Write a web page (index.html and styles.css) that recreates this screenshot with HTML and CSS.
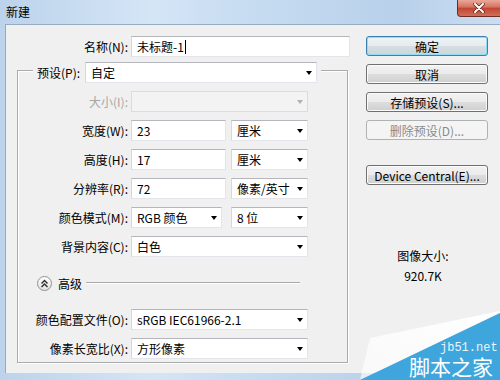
FILE: index.html
```html
<!DOCTYPE html>
<html lang="zh-CN">
<head>
  <meta charset="UTF-8">
  <title>新建</title>
  <link rel="stylesheet" href="styles.css">
</head>
<body>

  <div class="window">
    <div class="titlebar">
      <span class="title">新建</span>
      <span class="close">
        <svg width="12" height="10" viewBox="0 0 12 10"><path d="M2 1 L10 9 M10 1 L2 9" stroke="#5a1d14" stroke-width="3.4" stroke-linecap="round"/><path d="M2 1 L10 9 M10 1 L2 9" stroke="#fff" stroke-width="2" stroke-linecap="round"/></svg>
      </span>
    </div>

    <div class="client">
      <div class="form">
        <div class="name-row">
          <span class="name-label">名称(N):</span>
          <div class="field name-field">未标题-1<span class="caret"></span></div>
        </div>

        <div class="group">
          <div class="group-head">
            <span>预设(P):</span>
            <div class="select preset"><span>自定</span><i class="arrow"></i></div>
          </div>

          <div class="rows rows-top">
            <div class="row off">
              <label>大小(I):</label>
              <div class="select wide"><span></span><i class="arrow"></i></div>
            </div>
            <div class="row">
              <label>宽度(W):</label>
              <div class="field num">23</div>
              <div class="select unit"><span>厘米</span><i class="arrow"></i></div>
            </div>
            <div class="row">
              <label>高度(H):</label>
              <div class="field num">17</div>
              <div class="select unit"><span>厘米</span><i class="arrow"></i></div>
            </div>
            <div class="row">
              <label>分辨率(R):</label>
              <div class="field num">72</div>
              <div class="select unit"><span>像素/英寸</span><i class="arrow"></i></div>
            </div>
            <div class="row">
              <label>颜色模式(M):</label>
              <div class="select mode"><span>RGB 颜色</span><i class="arrow"></i></div>
              <div class="select unit"><span>8 位</span><i class="arrow"></i></div>
            </div>
            <div class="row">
              <label>背景内容(C):</label>
              <div class="select wide"><span>白色</span><i class="arrow"></i></div>
            </div>
          </div>

          <div class="advanced">
            <span class="adv-btn">
              <svg width="9" height="9" viewBox="0 0 9 9"><path d="M1.5 4.5 L4.5 1.5 L7.5 4.5 M1.5 8 L4.5 5 L7.5 8" fill="none" stroke="#2b2b2b" stroke-width="1.4"/></svg>
            </span>
            <span class="adv-text">高级</span>
            <span class="adv-line"></span>
          </div>

          <div class="rows">
            <div class="row">
              <label>颜色配置文件(O):</label>
              <div class="select wide"><span>sRGB IEC61966-2.1</span><i class="arrow"></i></div>
            </div>
            <div class="row">
              <label>像素长宽比(X):</label>
              <div class="select wide"><span>方形像素</span><i class="arrow"></i></div>
            </div>
          </div>
        </div>
      </div>

      <div class="side">
        <button class="btn default">确定</button>
        <button class="btn">取消</button>
        <button class="btn">存储预设(S)...</button>
        <button class="btn" disabled>删除预设(D)...</button>
        <button class="btn device">Device Central(E)...</button>
        <div class="info">
          <div>图像大小:</div>
          <div>920.7K</div>
        </div>
      </div>
    </div>

    <svg class="watermark" width="145" height="75" viewBox="0 0 145 75">
      <defs>
        <linearGradient id="fade" x1="0" y1="1" x2="1" y2="0">
          <stop offset="0" stop-color="#ffffff" stop-opacity="0.6"/>
          <stop offset="1" stop-color="#ffffff" stop-opacity="1"/>
        </linearGradient>
      </defs>
      <polygon points="15,33 145,6 145,8 5,75" fill="url(#fade)"/>
      <polygon points="5,75 145,8 145,75" fill="#3ea6dd"/>
      <text x="85" y="46" class="wm-site">jb51.net</text>
      <text x="54" y="70" class="wm-name">脚本之家</text>
    </svg>
  </div>

</body>
</html>
```

FILE: styles.css
```css
body {
  margin: 0;
  font-family: "Noto Sans CJK SC", "Noto Sans", sans-serif;
  font-size: 12px;
  color: #000;
}
.window {
  position: relative;
  width: 500px;
  height: 380px;
  box-sizing: border-box;
  padding: 0 0 7px 5px;
  display: flex;
  flex-direction: column;
  overflow: hidden;
  background: linear-gradient(to right, #bcd3eb, #d4e5f6 30%, #c4daf0 55%, #b8d0ea 80%, #cadef3);
}
.titlebar {
  height: 24px;
  display: flex;
  align-items: center;
}
.title {
  margin-left: 1px;
  line-height: 16px;
}
.close {
  margin-left: auto;
  margin-right: -6px;
  align-self: flex-start;
  width: 49px;
  height: 17px;
  box-sizing: border-box;
  border: 1px solid #6e2c22;
  border-top: none;
  border-radius: 0 0 0 4px;
  display: flex;
  align-items: center;
  justify-content: center;
  padding-right: 6px;
  background: linear-gradient(#e9a898, #d47161 45%, #c24430 50%, #d0705a);
}
.client {
  flex: 1;
  display: flex;
  gap: 16px;
  padding-top: 11px;
  background: #f0f0f0;
  border-top: 1px solid #98aac0;
  border-left: 1px solid #98aac0;
}
.form {
  width: 344px;
}
.name-row {
  display: flex;
  align-items: center;
  gap: 3px;
}
.name-label {
  width: 122px;
  text-align: right;
}
.field, .select {
  height: 21px;
  box-sizing: border-box;
  display: flex;
  align-items: center;
  padding: 0 4px 0 5px;
  background: #fff;
  border: 1px solid #e4e5ea;
  border-top-color: #b4b6bc;
  border-left-color: #d6d8de;
  white-space: nowrap;
}
.name-field {
  width: 219px;
}
.caret {
  width: 1px;
  height: 14px;
  margin-left: 1px;
  background: #000;
}
.select span {
  flex: 1;
}
.arrow {
  width: 0;
  height: 0;
  border-top: 4px solid #000;
  border-left: 3px solid transparent;
  border-right: 3px solid transparent;
}
.group {
  margin: 13px 0 0 11px;
  width: 331px;
  box-sizing: border-box;
  padding-bottom: 3px;
  border: 1px solid #ababab;
  box-shadow: 1px 1px 0 #fff, inset 1px 1px 0 #fff;
}
.group-head {
  display: flex;
  align-items: center;
  gap: 5px;
  width: fit-content;
  margin: -9px 0 0 15px;
  padding: 0 4px;
  background: #f0f0f0;
}
.preset {
  width: 232px;
}
.rows {
  display: flex;
  flex-direction: column;
  gap: 8px;
}
.rows-top {
  margin-top: 8px;
}
.row {
  display: flex;
  align-items: center;
}
.row label {
  width: 110px;
  margin-right: 3px;
  text-align: right;
}
.row.off label {
  color: #a6a6a6;
}
.row.off .select {
  background: #f3f3f3;
  border-color: #dcdcdc;
}
.row.off .arrow {
  border-top-color: #b0b0b0;
}
.wide {
  width: 177px;
}
.num {
  width: 95px;
}
.unit {
  width: 77px;
  margin-left: 5px;
}
.mode {
  width: 91px;
  margin-right: 4px;
}
.advanced {
  display: flex;
  align-items: center;
  height: 16px;
  margin: 18px 47px 18px 19px;
}
.adv-btn {
  width: 15px;
  height: 15px;
  box-sizing: border-box;
  border: 1px solid #8f9090;
  border-radius: 50%;
  display: flex;
  align-items: center;
  justify-content: center;
  background: linear-gradient(#ffffff, #e2e2e2);
}
.adv-text {
  margin-left: 6px;
}
.adv-line {
  flex: 1;
  margin-left: 4px;
  border-top: 1px solid #a8a8a8;
  border-bottom: 1px solid #fff;
}
.side {
  width: 122px;
  display: flex;
  flex-direction: column;
  gap: 8px;
}
.btn {
  height: 20px;
  padding: 0;
  font-family: inherit;
  font-size: 12px;
  color: #000;
  border: 1px solid #707070;
  border-radius: 3px;
  box-shadow: inset 0 0 0 1px #fbfbfb;
  background: linear-gradient(#f2f2f2, #ebebeb 50%, #dddddd 51%, #cfcfcf);
}
.btn.default {
  border-color: #3c7fb1;
  box-shadow: inset 0 0 0 1px #8fdcf6;
  background: linear-gradient(#eef3f6, #e5ebee 50%, #d7dee2 51%, #ccd5da);
}
.btn:disabled {
  color: #8a8a8a;
  border-color: #adb2b5;
  box-shadow: none;
  background: #f4f4f4;
}
.device {
  margin-top: 17px;
}
.info {
  margin-top: 53px;
  padding-right: 8px;
  text-align: center;
  line-height: 20px;
}
.watermark {
  position: absolute;
  left: 355px;
  top: 305px;
}
.wm-site {
  font-family: "Liberation Mono", monospace;
  font-size: 12px;
  fill: #e8f5fc;
}
.wm-name {
  font-family: "Noto Sans CJK SC", sans-serif;
  font-size: 21px;
  fill: #fff;
}
```
